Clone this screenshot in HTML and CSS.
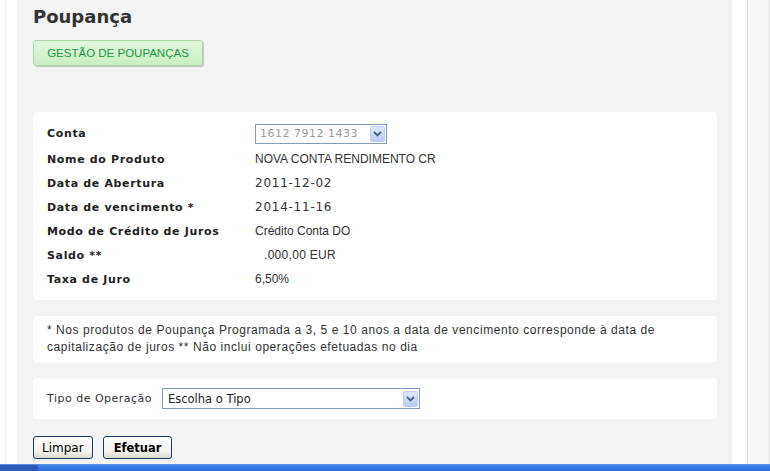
FILE: index.html
```html
<!DOCTYPE html>
<html lang="pt">
<head>
<meta charset="utf-8">
<title>Poupança</title>
<link rel="stylesheet" href="styles.css">
</head>
<body>
<div class="screen">
  <div class="left-strip"><div class="left-line"></div></div>
  <main class="main">
    <h1 class="title">Poupança</h1>
    <div class="tab-row"><span class="green-btn">GESTÃO DE POUPANÇAS</span></div>
    <section class="card details">
      <div class="row row-select">
        <div class="label">Conta</div>
        <div class="value">
          <div class="select select-conta">
            <span class="select-text masked">1612 7912 1433</span>
            <span class="arrow"><svg width="9" height="6" viewBox="0 0 9 6"><path d="M1 1 L4.5 4.5 L8 1" fill="none" stroke="#4d6185" stroke-width="1.8"/></svg></span>
          </div>
        </div>
      </div>
      <div class="row"><div class="label">Nome do Produto</div><div class="value">NOVA CONTA RENDIMENTO CR</div></div>
      <div class="row"><div class="label">Data de Abertura</div><div class="value date">2011-12-02</div></div>
      <div class="row"><div class="label">Data de vencimento *</div><div class="value date">2014-11-16</div></div>
      <div class="row"><div class="label">Modo de Crédito de Juros</div><div class="value">Crédito Conta DO</div></div>
      <div class="row"><div class="label">Saldo **</div><div class="value saldo">.000,00 EUR</div></div>
      <div class="row"><div class="label">Taxa de Juro</div><div class="value">6,50%</div></div>
    </section>
    <section class="card note">
      * Nos produtos de Poupança Programada a 3, 5 e 10 anos a data de vencimento corresponde à data de capitalização de juros ** Não inclui operações efetuadas no dia
    </section>
    <section class="card operation">
      <span class="op-label">Tipo de Operação</span>
      <div class="select select-op">
        <span class="select-text">Escolha o Tipo</span>
        <span class="arrow"><svg width="9" height="6" viewBox="0 0 9 6"><path d="M1 1 L4.5 4.5 L8 1" fill="none" stroke="#4d6185" stroke-width="1.8"/></svg></span>
      </div>
    </section>
    <div class="actions">
      <button class="xp-btn">Limpar</button>
      <button class="xp-btn bold">Efetuar</button>
    </div>
  </main>
  <div class="right-frame">
    <div class="rf-white"></div>
    <div class="rf-gray"></div>
  </div>
</div>
<div class="taskbar"><div class="tb-start"></div><div class="tb-rest"></div></div>
</body>
</html>
```
FILE: styles.css
```css
html, body {
  margin: 0;
  padding: 0;
  width: 770px;
  height: 471px;
  overflow: hidden;
  background: #ffffff;
  font-family: "Liberation Sans", Arial, sans-serif;
}
.screen {
  display: flex;
  height: 464px;
}
.left-strip {
  width: 17px;
  background: #ffffff;
  display: flex;
}
.left-line {
  width: 1px;
  margin-left: 5px;
  background: #eeeeee;
}
.main {
  width: 684px;
  background: #f4f4f4;
  padding: 0 15px 0 16px;
}
.title {
  margin: 5px 0 0 0;
  height: 24px;
  line-height: 24px;
  font-family: "DejaVu Sans", Verdana, sans-serif;
  font-weight: bold;
  font-size: 18px;
  color: #333333;
}
.tab-row {
  margin-top: 11px;
  display: flex;
}
.green-btn {
  display: inline-block;
  width: 168px;
  height: 24px;
  line-height: 25px;
  text-align: center;
  font-size: 11.5px;
  color: #1a9a3c;
  background: linear-gradient(#e2f7dd, #c9eec3);
  border: 1px solid #add6a6;
  border-radius: 3px;
  box-shadow: 1px 1px 1px #c3c3c3;
}
.card {
  background: #ffffff;
  border-radius: 4px;
}
.details {
  margin-top: 46px;
  padding: 8px 14px 9px 14px;
}
.row {
  display: flex;
  height: 24px;
  align-items: center;
}
.row-select {
  height: 27px;
}
.label {
  width: 208px;
  font-family: "DejaVu Sans", Verdana, sans-serif;
  font-weight: bold;
  font-size: 11px;
  letter-spacing: 0.65px;
  color: #222222;
}
.value {
  font-size: 12px;
  color: #333333;
}
.value.date {
  font-family: "DejaVu Sans", Verdana, sans-serif;
  letter-spacing: 0.75px;
}
.value.saldo {
  padding-left: 9px;
  letter-spacing: 0.3px;
}
.select {
  display: flex;
  align-items: center;
  background: #ffffff;
  border: 1px solid #7f9db9;
  box-sizing: border-box;
}
.select-conta {
  width: 132px;
  height: 20px;
}
.select-text {
  flex: 1;
  padding-left: 4px;
  font-family: "DejaVu Sans", Verdana, sans-serif;
  font-size: 11px;
  color: #222222;
  white-space: nowrap;
  overflow: hidden;
}
.masked {
  color: #9a9a9a;
  letter-spacing: 0.5px;
}
.arrow {
  width: 15px;
  height: 16px;
  margin-right: 1px;
  box-sizing: border-box;
  border: 1px solid #bccdf4;
  border-radius: 2px;
  background: linear-gradient(#dfe8fd, #b9cdf7);
  display: flex;
  align-items: center;
  justify-content: center;
}
.note {
  margin-top: 16px;
  padding: 6px 14px 6px 14px;
  font-size: 12px;
  letter-spacing: 0.56px;
  line-height: 17px;
  color: #333333;
  height: 34px;
}
.operation {
  margin-top: 16px;
  height: 41px;
  box-sizing: border-box;
  padding: 0 14px;
  display: flex;
  align-items: center;
}
.op-label {
  width: 115px;
  font-family: "DejaVu Sans", Verdana, sans-serif;
  font-size: 11px;
  letter-spacing: 0.5px;
  color: #333333;
}
.select-op {
  width: 258px;
  height: 21px;
}
.select-op .select-text {
  padding-left: 5px;
  font-size: 11.5px;
}
.actions {
  margin-top: 17px;
  display: flex;
  gap: 10px;
}
.xp-btn {
  height: 23px;
  padding: 0 8px;
  font-family: "DejaVu Sans", Verdana, sans-serif;
  font-size: 12px;
  color: #000000;
  background: linear-gradient(#ffffff, #f3f2ec 70%, #dcd9cd);
  border: 1px solid #1c3d63;
  border-radius: 3px;
}
.xp-btn.bold {
  font-weight: bold;
  font-size: 11.5px;
  padding: 0 10px;
}
.right-frame {
  flex: 1;
  display: flex;
}
.rf-white {
  width: 15px;
  background: #ffffff;
  border-right: 1px solid #d4d4d4;
}
.rf-gray {
  flex: 1;
  background: #f8f8f8;
  border-left: 1px solid #ffffff;
  border-right: 1px solid #e2e2e2;
}
.taskbar {
  height: 7px;
  display: flex;
  border-top: 1px solid #5a8fe8;
  box-sizing: border-box;
}
.tb-start {
  width: 38px;
  background: #2c5bb8;
}
.tb-rest {
  flex: 1;
  background: linear-gradient(#3d86ea, #2f6fd6);
}
```
